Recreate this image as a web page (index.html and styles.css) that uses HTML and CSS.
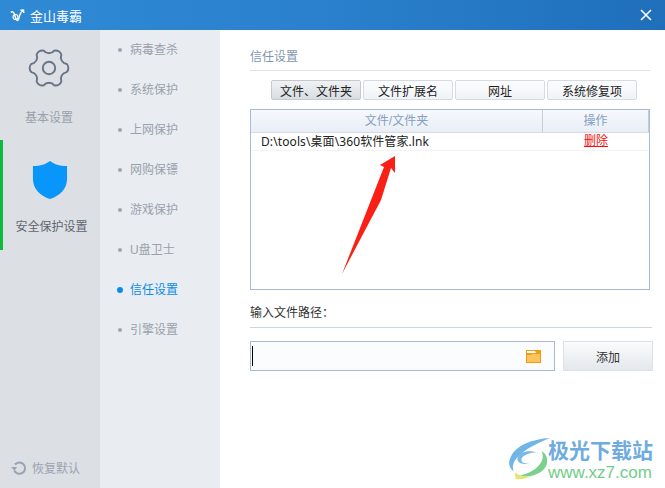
FILE: index.html
```html
<!DOCTYPE html>
<html lang="zh-CN">
<head>
    <meta charset="UTF-8">
    <meta name="viewport" content="width=device-width, initial-scale=1.0">
    <title>金山毒霸</title>
    <link rel="stylesheet" href="styles.css">
</head>
<body>
    <div class="window">
        <header class="titlebar">
            <div class="brand">
                <svg class="brand-logo" width="15" height="13" viewBox="0 0 15 13">
                    <path d="M.8 3.500C2.500 2 3.800 3 4.500 5.500S6.200 11.500 7.500 11.500 9 8.500 9.800 6 11 3 13 1.500M10.500 1.200 13.500 1 13.800 4" fill="none" stroke="#fff" stroke-width="1.400"/>
                    <circle cx="5.500" cy="8" r="2.500" fill="none" stroke="#fff" stroke-width="1.200"/>
                </svg>
                <span>金山毒霸</span>
            </div>
            <svg class="close" width="12" height="12" viewBox="0 0 12 12">
                <path d="M1 1 11 11M11 1 1 11" stroke="#fff" stroke-width="1.600"/>
            </svg>
        </header>

        <div class="main">
            <nav class="sidebar">
                <div class="side-item">
                    <svg class="side-icon" width="42" height="42" viewBox="-1 -1 44 44">
                        <path d="M39.510 16.730A6 6 0 0 1 39.510 25.270A7 7 0 0 0 33.960 34.900A6 6 0 0 1 26.550 39.170A7 7 0 0 0 15.450 39.170A6 6 0 0 1 8.040 34.900A7 7 0 0 0 2.490 25.270A6 6 0 0 1 2.490 16.730A7 7 0 0 0 8.040 7.100A6 6 0 0 1 15.450 2.830A7 7 0 0 0 26.550 2.830A6 6 0 0 1 33.960 7.100A7 7 0 0 0 39.510 16.730z" fill="none" stroke="#667388" stroke-width="2"/>
                        <circle cx="21" cy="21" r="6.500" fill="none" stroke="#667388" stroke-width="2"/>
                    </svg>
                    <span class="side-label">基本设置</span>
                </div>
                <div class="side-item active">
                    <svg class="side-icon" width="36" height="40" viewBox="0 0 38 40" preserveAspectRatio="none">
                        <path d="M19 1c4 3 10 5 18 5v13c0 10-8 17-18 20C9 36 1 29 1 19V6c8 0 14-2 18-5z" fill="#0996fb"/>
                    </svg>
                    <span class="side-label">安全保护设置</span>
                </div>
                <div class="restore">
                    <svg width="16" height="16" viewBox="0 0 16 16">
                        <path d="M4 4.500a5.700 5.700 0 1 1-.8 6" fill="none" stroke="#98a3b3" stroke-width="2"/>
                        <path d="M0 7h6L3.500 10.500z" fill="#98a3b3"/>
                    </svg>
                    <span>恢复默认</span>
                </div>
            </nav>

            <ul class="submenu">
                <li>病毒查杀</li>
                <li>系统保护</li>
                <li>上网保护</li>
                <li>网购保镖</li>
                <li>游戏保护</li>
                <li>U盘卫士</li>
                <li class="current">信任设置</li>
                <li>引擎设置</li>
            </ul>

            <section class="content">
                <h2 class="section-title">信任设置</h2>

                <div class="tabs">
                    <button class="tab selected">文件、文件夹</button>
                    <button class="tab">文件扩展名</button>
                    <button class="tab">网址</button>
                    <button class="tab">系统修复项</button>
                </div>

                <div class="table">
                    <div class="table-head">
                        <div class="col-path">文件/文件夹</div>
                        <div class="col-action">操作</div>
                    </div>
                    <div class="table-row">
                        <div class="cell-path">D:\tools\桌面\360软件管家.lnk</div>
                        <div class="cell-action">删除</div>
                    </div>
                </div>

                <div class="path-label">输入文件路径：</div>

                <div class="path-row">
                    <div class="path-input">
                        <span class="caret"></span>
                        <svg width="15" height="13" viewBox="0 0 15 13">
                            <path d="M0 0h15v13H0z" fill="#f59a16"/>
                            <path d="M1 1h8l1 2H1z" fill="#fff"/>
                            <path d="M1 5h4l1-1h8v8H1z" fill="#fdc45a"/>
                        </svg>
                    </div>
                    <button class="add-btn">添加</button>
                </div>
            </section>
        </div>

        <svg class="arrow" width="56" height="122" viewBox="0 0 56 122">
            <path d="M1 120 43 13 39 11 54 2 54 19 50 14 40 46z" fill="#fb2016"/>
        </svg>

        <div class="watermark">
            <svg width="46" height="42" viewBox="0 2 46 44">
                <path d="M45 2C28 3 8 9 3 24c-2 6 0 10 4 13C3 28 12 15 45 2z" fill="#62aee4"/>
                <path d="M31 17c-9-3-19 0-20 6-1 5 6 8 13 5-5 1-9 0-9-3 0-4 8-8 16-8z" fill="#6cb2de"/>
                <path d="M36 16c5 9-3 21-24 26 16 2 30-5 30-16 0-5-2-8-6-10z" fill="#6ccc80"/>
                <path d="M8 38c6 4 11 5 18 4-6 2-11 4-17 3z" fill="#dfe56a"/>
            </svg>
            <div class="wm-text">
                <div class="wm-name">极光下载站</div>
                <div class="wm-url">www.xz7.com</div>
            </div>
        </div>
    </div>
</body>
</html>
```

FILE: styles.css
```css
* {
    box-sizing: border-box;
}

body {
    margin: 0;
    font-family: "Liberation Sans", "Noto Sans CJK SC", sans-serif;
    font-size: 12px;
    background-color: white;
}

.window {
    position: relative;
    width: 665px;
    height: 488px;
    overflow: hidden;
}

.titlebar {
    height: 30px;
    display: flex;
    justify-content: space-between;
    align-items: center;
    padding: 0 13px 0 10px;
    background: linear-gradient(90deg, #2f8ad6, #2a80cc 50%, #1f6fbb);
    color: white;
}

.brand {
    display: flex;
    align-items: center;
    gap: 5px;
    font-size: 13px;
}

.main {
    display: flex;
    height: 458px;
}

/* Left column */
.sidebar {
    width: 100px;
    flex-shrink: 0;
    display: flex;
    flex-direction: column;
    background-color: #dcdfe3;
}

.side-item {
    height: 110px;
    display: flex;
    flex-direction: column;
    align-items: center;
    padding-top: 17px;
    padding-right: 2px;
    color: #9aa1ac;
}

.side-item.active {
    border-left: 3px solid #0dbb3c;
    color: #5f6670;
    padding-right: 0;
    padding-top: 20px;
}

.side-icon {
    display: block;
}

.side-item.active .side-icon {
    margin-right: 4px;
}

.side-label {
    margin-top: 21px;
    line-height: 16px;
}

.side-item.active .side-label {
    margin-top: 19px;
}

.restore {
    margin-top: auto;
    margin-bottom: 12px;
    margin-left: 11px;
    display: flex;
    align-items: center;
    gap: 5px;
    color: #9aa4b3;
}

/* Second column */
.submenu {
    width: 120px;
    flex-shrink: 0;
    margin: 0;
    padding: 0 0 0 30px;
    list-style: none;
    background-color: #e9edf2;
    color: #9aa1ac;
}

.submenu li {
    position: relative;
    height: 40px;
    line-height: 40px;
}

.submenu li::before {
    content: "";
    position: absolute;
    left: -12px;
    top: 18px;
    width: 4px;
    height: 4px;
    border-radius: 50%;
    background-color: #a2a6ab;
}

.submenu li.current {
    color: #0b8ce8;
}

.submenu li.current::before {
    left: -13px;
    top: 17px;
    width: 6px;
    height: 6px;
    background-color: #0b8ce8;
}

/* Right panel */
.content {
    flex: 1;
    min-width: 0;
    padding-left: 30px;
}

.section-title {
    height: 41px;
    margin: 0;
    padding-top: 19px;
    width: 400px;
    font-size: 12px;
    font-weight: normal;
    line-height: 16px;
    color: #7f96b0;
    border-bottom: 1px solid #dfe3e8;
}

.tabs {
    display: flex;
    gap: 2px;
    margin: 9px 0 9px 21px;
}

.tab {
    width: 90px;
    height: 20px;
    padding: 0;
    font: inherit;
    color: #222;
    border: 1px solid #d6dade;
    border-radius: 2px;
    background: linear-gradient(#fbfcfd, #f0f3f6);
}

.tab.selected {
    border-color: #c4c9ce;
    background: linear-gradient(#f0f2f4, #d8dde1);
}

.table {
    width: 400px;
    height: 181px;
    border: 1px solid #a6bbd3;
}

.table-head {
    display: flex;
    height: 23px;
    line-height: 22px;
    text-align: center;
    color: #86a0be;
    background: linear-gradient(#f6f8fc, #e9eef6);
    border-bottom: 1px solid #d5dbe2;
}

.col-path {
    width: 292px;
    border-right: 1px solid #c6cfd9;
}

.col-action {
    flex: 1;
    border-right: 1px solid #c6cfd9;
}

.table-row {
    display: flex;
    height: 18px;
    line-height: 17px;
    border-bottom: 1px solid #f1f3f5;
    color: #222;
}

.cell-path {
    width: 292px;
    padding-left: 10px;
    font-family: "Noto Sans", "Noto Sans CJK SC", sans-serif;
    letter-spacing: 0.1px;
}

.cell-action {
    flex: 1;
    text-align: center;
    color: #f01010;
    text-decoration: underline;
}

.path-label {
    width: 402px;
    height: 38px;
    padding-top: 15px;
    line-height: 16px;
    color: #333;
    border-bottom: 1px solid #c9d6e2;
}

.path-row {
    display: flex;
    gap: 8px;
    margin-top: 13px;
}

.path-input {
    width: 305px;
    height: 30px;
    display: flex;
    justify-content: space-between;
    align-items: center;
    padding: 0 13px 0 1px;
    border: 1px solid #a6bbd3;
    background-color: #fbfcfe;
}

.caret {
    width: 1px;
    height: 20px;
    background-color: #000;
}

.add-btn {
    width: 90px;
    height: 30px;
    padding: 0;
    font: inherit;
    color: #333;
    border: 1px solid #dde1e5;
    background: linear-gradient(#fafbfc, #e4e8ec);
}

/* Things lying over the panel */
.arrow {
    position: absolute;
    left: 341px;
    top: 154px;
}

.watermark {
    position: absolute;
    left: 506px;
    top: 438px;
    display: flex;
    opacity: 0.9;
}

.wm-text {
    margin-left: -4px;
}

.wm-name {
    font-size: 21px;
    line-height: 25px;
    font-weight: bold;
    color: #5fa3dc;
    white-space: nowrap;
}

.wm-url {
    font-size: 17px;
    line-height: 20px;
    color: #63c87c;
    white-space: nowrap;
}
```
